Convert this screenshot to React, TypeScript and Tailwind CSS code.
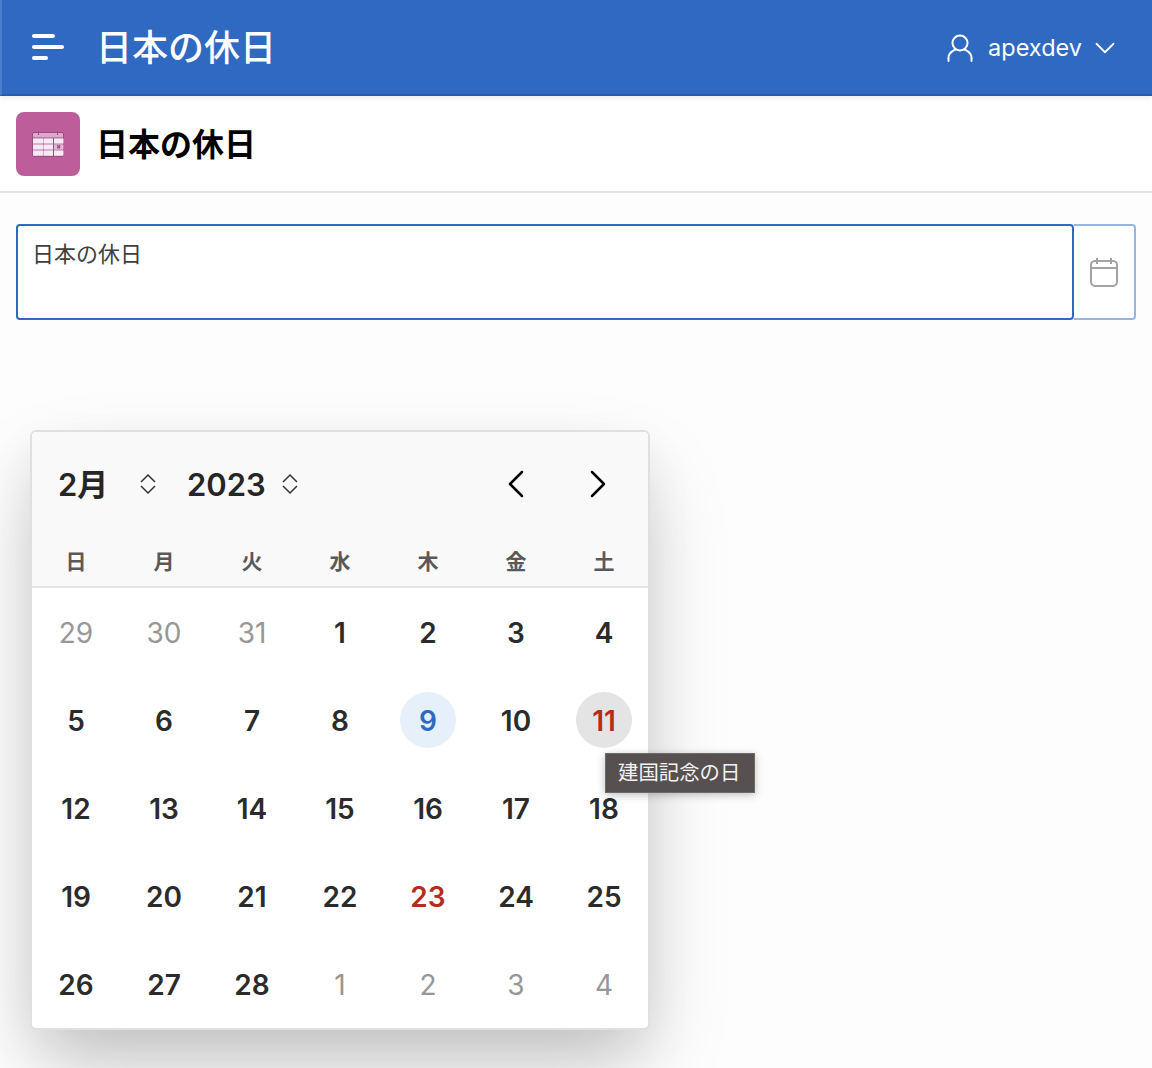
import React from 'react';
import { ChevronDown, ChevronLeft, ChevronRight } from 'lucide-react';

const FONT = 'font-[Inter,"Noto_Sans_CJK_JP",sans-serif]';

const WEEKDAYS = ['日', '月', '火', '水', '木', '金', '土'];

type Day = {
  label: number;
  muted?: boolean;
  holiday?: boolean;
  today?: boolean;
  hovered?: boolean;
};

const DAYS: Day[] = [
  { label: 29, muted: true },
  { label: 30, muted: true },
  { label: 31, muted: true },
  ...[1, 2, 3, 4, 5, 6, 7, 8].map((label) => ({ label })),
  { label: 9, today: true },
  { label: 10 },
  { label: 11, holiday: true, hovered: true },
  ...[12, 13, 14, 15, 16, 17, 18, 19, 20, 21, 22].map((label) => ({ label })),
  { label: 23, holiday: true },
  ...[24, 25, 26, 27, 28].map((label) => ({ label })),
  ...[1, 2, 3, 4].map((label) => ({ label, muted: true })),
];

function UserIcon() {
  return (
    <svg width="26" height="30" viewBox="0 0 26 30" fill="none" stroke="white" strokeWidth="2" strokeLinecap="round">
      <circle cx="13" cy="10" r="7.5" />
      <path d="M8.5 16.5C5 18 2 20 1.5 24v4M17.5 16.5c3.5 1.500 6.500 3.500 7 7.500v4" />
    </svg>
  );
}

function TableIcon() {
  return (
    <svg width="32" height="26" viewBox="0 0 32 26">
      <rect x="0.500" y="1.500" width="31" height="24" rx="1.500" fill="#dfa8cc" stroke="#9a4b82" />
      <path d="M6.500 0v4M25.500 0v4" stroke="#9a4b82" />
      <path d="M1 7h30M1 13h30M1 19h30M11 7v18M21.500 7v18" stroke="#9a4b82" />
      {[7.500, 13.500, 19.500].map((y) =>
        [1, 11.500, 22].map((x) => (
          <rect key={`${x}-${y}`} x={x} y={y} width={x === 1 ? 10 : 9.500} height="5" fill={x === 22 && y === 13.500 ? '#e3b9d6' : '#f7e9f3'} />
        ))
      )}
      <path d="M25.200 14.300l3 3M28.200 14.300l-3 3" stroke="#9a4b82" strokeWidth="1.300" />
    </svg>
  );
}

function CalendarIcon() {
  return (
    <svg width="30" height="30" viewBox="0 0 30 30" fill="none" stroke="#a3a3a3" strokeWidth="2">
      <rect x="2" y="4" width="26" height="25" rx="4" />
      <path d="M2 11h26M8 1v6M22 1v6" />
    </svg>
  );
}

function UpDownIcon() {
  return (
    <svg width="16" height="22" viewBox="0 0 16 22" fill="none" stroke="#333333" strokeWidth="1.500">
      <path d="M1 9l7-7 7 7M1 13l7 7 7-7" />
    </svg>
  );
}

function DayCell({ day }: { day: Day }) {
  const color = day.muted
    ? 'text-[#979797] font-normal'
    : day.today
      ? 'text-[#2f69c1] font-semibold'
      : day.holiday
        ? 'text-[#b62b1c] font-semibold'
        : 'text-[#2b2b2b] font-semibold';
  const bg = day.today ? 'bg-[#e6f0fa]' : day.hovered ? 'bg-[#e4e4e4]' : '';

  return (
    <div className="relative flex h-[88px] items-center justify-center">
      <span className={`flex h-14 w-14 items-center justify-center rounded-full pt-[1px] text-[28px] leading-none ${color} ${bg}`}>
        {day.label}
      </span>
      {day.hovered && (
        <div className="absolute left-[45px] top-[77px] z-10 flex h-10 w-[150px] items-center border border-[#6f6a68] bg-[#565050] pl-3 text-[20.4px] whitespace-nowrap text-[#f2f2f2] shadow-[0_2px_8px_rgba(0,0,0,0.25)]">
          建国記念の日
        </div>
      )}
    </div>
  );
}

export default function App() {
  return (
    <div className={`h-[1068px] overflow-hidden bg-[#fdfdfd] ${FONT}`}>
      <header className="relative flex h-[96px] items-center border-b-2 border-l-2 border-[#2a5ba8] border-l-[#4a7dca] bg-[#2f69c1] pr-[30px] pl-[30px] text-white shadow-[0_2px_6px_rgba(0,0,0,0.08)]">
        <div className="flex w-[32px] flex-col gap-[7px]">
          <span className="h-1 w-[23px] rounded-full bg-white" />
          <span className="h-1 w-[32px] rounded-full bg-white" />
          <span className="h-1 w-[16px] rounded-full bg-white" />
        </div>
        <h1 className="ml-[32px] pt-[2px] text-[36px] leading-none font-medium">日本の休日</h1>
        <div className="ml-auto flex items-center pt-[2px]">
          <UserIcon />
          <span className="ml-[15px] text-[23.5px] leading-none">apexdev</span>
          <ChevronDown className="ml-[6px] h-[34px] w-[34px]" strokeWidth={1.25} />
        </div>
      </header>

      <div className="flex h-[97px] items-center border-b-2 border-[#e5e5e5] bg-white pl-4">
        <div className="flex h-16 w-16 items-center justify-center rounded-lg bg-[#bd5e9b]">
          <TableIcon />
        </div>
        <h2 className="ml-[16px] pt-[2px] text-[32px] leading-none font-semibold text-black">日本の休日</h2>
      </div>

      <div className="mx-4 mt-[31px] flex h-[96px]">
        <div className="flex-1 rounded border-2 border-[#2f69c1] bg-white px-[14px] pt-[15px] text-[22px] leading-[26px] text-[#404040]">
          日本の休日
        </div>
        <div className="flex w-[62px] items-center justify-center rounded-r border-2 border-l-0 border-[#97b5e2] bg-white">
          <CalendarIcon />
        </div>
      </div>

      <div className="mt-[110px] ml-[30px] w-[620px] rounded-md border-2 border-[#e0e0e0] bg-white shadow-[0_40px_80px_-10px_rgba(0,0,0,0.22),0_20px_50px_rgba(0,0,0,0.06)]">
        <div className="rounded-t-md border-b-2 border-[#e4e4e4] bg-[#f9f9f9]">
          <div className="flex h-[104px] items-center pr-[26px] pl-[26px] text-[#262626]">
            <span className="w-[50px] pt-[1px] text-[31px] leading-none font-semibold whitespace-nowrap">2月</span>
            <span className="ml-[32px]">
              <UpDownIcon />
            </span>
            <span className="ml-[31px] pt-[1px] text-[31px] leading-none font-semibold">2023</span>
            <span className="ml-[16px]">
              <UpDownIcon />
            </span>
            <ChevronLeft className="ml-auto h-12 w-12 text-black" strokeWidth={1.25} />
            <ChevronRight className="ml-[34px] h-12 w-12 text-black" strokeWidth={1.25} />
          </div>
          <div className="grid h-[50px] grid-cols-7 items-start pt-[13px]">
            {WEEKDAYS.map((name) => (
              <div key={name} className="text-center text-[21px] leading-[26px] font-semibold text-[#595959]">
                {name}
              </div>
            ))}
          </div>
        </div>
        <div className="grid grid-cols-7">
          {DAYS.map((day, i) => (
            <DayCell key={i} day={day} />
          ))}
        </div>
      </div>
    </div>
  );
}
